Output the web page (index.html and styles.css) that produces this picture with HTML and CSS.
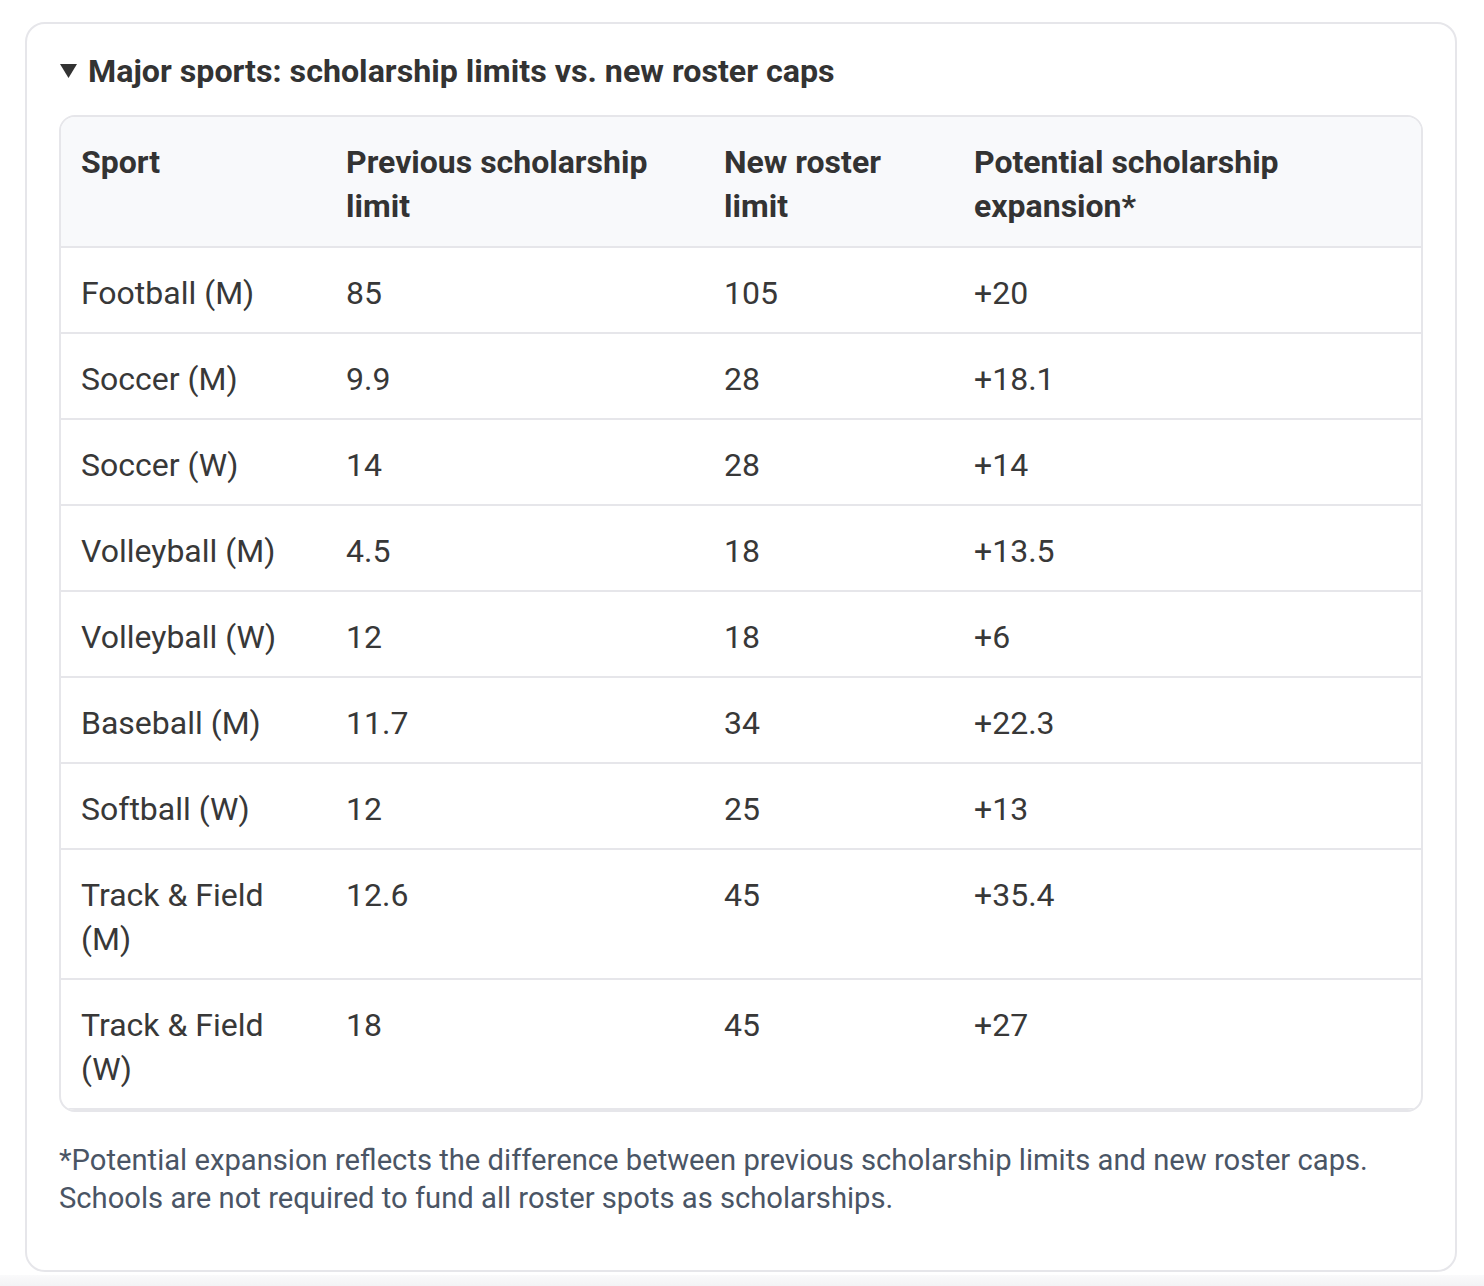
FILE: index.html
```html
<!DOCTYPE html>
<html lang="en">
<head>
<meta charset="utf-8">
<title>Major sports: scholarship limits vs. new roster caps</title>
<link rel="stylesheet" href="styles.css">
</head>
<body>
<div class="page">
  <section class="card">
    <div class="card-title">
      <svg class="caret" width="17" height="14" viewBox="0 0 17 14" aria-hidden="true"><polygon points="0,0 17,0 8.5,14" fill="#333"/></svg>
      <span>Major sports: scholarship limits vs. new roster caps</span>
    </div>
    <div class="table-wrap">
      <table class="data">
        <colgroup>
          <col class="c1"><col class="c2"><col class="c3"><col class="c4">
        </colgroup>
        <thead>
          <tr><th>Sport</th><th>Previous scholarship limit</th><th>New roster limit</th><th>Potential scholarship expansion*</th></tr>
        </thead>
        <tbody>
          <tr><td>Football (M)</td><td>85</td><td>105</td><td>+20</td></tr>
          <tr><td>Soccer (M)</td><td>9.9</td><td>28</td><td>+18.1</td></tr>
          <tr><td>Soccer (W)</td><td>14</td><td>28</td><td>+14</td></tr>
          <tr><td>Volleyball (M)</td><td>4.5</td><td>18</td><td>+13.5</td></tr>
          <tr><td>Volleyball (W)</td><td>12</td><td>18</td><td>+6</td></tr>
          <tr><td>Baseball (M)</td><td>11.7</td><td>34</td><td>+22.3</td></tr>
          <tr><td>Softball (W)</td><td>12</td><td>25</td><td>+13</td></tr>
          <tr><td>Track &amp; Field (M)</td><td>12.6</td><td>45</td><td>+35.4</td></tr>
          <tr><td>Track &amp; Field (W)</td><td>18</td><td>45</td><td>+27</td></tr>
        </tbody>
      </table>
    </div>
    <p class="note">*Potential expansion reflects the difference between previous scholarship limits and new roster caps. Schools are not required to fund all roster spots as scholarships.</p>
  </section>
</div>
<div class="bottom-strip"></div>
</body>
</html>
```
FILE: styles.css
```css
html, body {
  margin: 0;
  padding: 0;
  background: #ffffff;
}
body {
  font-family: Roboto, "Liberation Sans", Arial, sans-serif;
  color: #333333;
}
.page {
  padding: 22px 27px 0 25px;
}
.card {
  border: 2px solid #e6e6ea;
  border-radius: 20px;
  padding: 25px 32px 53px 32px;
  background: #ffffff;
}
.card-title {
  display: flex;
  align-items: center;
  gap: 11px;
  font-size: 32.2px;
  font-weight: 700;
  line-height: 44px;
  color: #333333;
  margin: 0 0 22px 1px;
}
.caret {
  display: block;
  flex: none;
}
.table-wrap {
  border: 2px solid #e6e6ea;
  border-radius: 16px;
  overflow: hidden;
}
.data {
  width: 100%;
  border-collapse: collapse;
  table-layout: fixed;
  font-size: 32px;
  line-height: 44px;
}
.c1 { width: 265px; }
.c2 { width: 378px; }
.c3 { width: 250px; }
.c4 { width: auto; }
.data th, .data td {
  text-align: left;
  vertical-align: top;
  border-bottom: 2px solid #e6e6ea;
}
.data th {
  padding: 23px 20px 18px 20px;
  background: #f8f9fb;
  font-weight: 700;
  color: #333333;
}
.data td {
  padding: 23px 20px 17px 20px;
  font-weight: 400;
  color: #383838;
}
.note {
  margin: 29px 0 0 0;
  font-size: 29.2px;
  line-height: 38px;
  color: #4a5565;
}
.bottom-strip {
  margin-top: 3px;
  height: 14px;
  background: linear-gradient(#fafafb, #f1f1f3);
}
```
